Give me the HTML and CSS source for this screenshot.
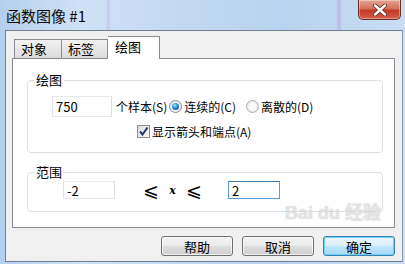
FILE: index.html
```html
<!DOCTYPE html>
<html lang="zh-CN">
<head>
	<meta charset="UTF-8">
	<title>函数图像 #1</title>
	<link rel="stylesheet" href="styles.css">
</head>
<body>
	<div class="window">
		<div class="titlebar">
			<span class="title">函数图像 #1</span>
			<button class="close">
				<svg width="16" height="12" viewBox="0 0 16 12">
					<path d="M3 1.5 L13 10.5 M13 1.5 L3 10.5" stroke="#5a2a22" stroke-width="4" stroke-linecap="round"/>
					<path d="M3 1.5 L13 10.5 M13 1.5 L3 10.5" stroke="#fff" stroke-width="2.4" stroke-linecap="round"/>
				</svg>
			</button>
		</div>
		<div class="client">
			<div class="tabs">
				<div class="tab first">对象</div>
				<div class="tab">标签</div>
				<div class="tab active">绘图</div>
			</div>
			<div class="panel">
				<fieldset class="group draw">
					<legend>绘图</legend>
					<div class="row samples">
						<input class="field num" type="text" value="750">
						<span class="lbl">个样本(S)</span>
						<span class="radio on"></span>
						<span class="lbl">连续的(C)</span>
						<span class="radio second"></span>
						<span class="lbl">离散的(D)</span>
					</div>
					<div class="row check-row">
						<span class="check">
							<svg width="11" height="11" viewBox="0 0 11 11"><path d="M2 5.5 L4.5 8.5 L9.5 1.5" fill="none" stroke="#24386e" stroke-width="2"/></svg>
						</span>
						<span class="lbl">显示箭头和端点(A)</span>
					</div>
				</fieldset>
				<fieldset class="group range">
					<legend>范围</legend>
					<div class="row">
						<input class="field small" type="text" value="-2">
						<span class="ineq"><span class="le">⩽</span><i>x</i><span class="le">⩽</span></span>
						<input class="field small focus" type="text" value="2">
					</div>
				</fieldset>
				<div class="mark">Bai du 经验</div>
			</div>
			<div class="buttons">
				<button class="btn">帮助</button>
				<button class="btn">取消</button>
				<button class="btn default">确定</button>
			</div>
		</div>
	</div>
</body>
</html>
```

FILE: styles.css
```css
*{
	margin: 0;
	padding: 0;
	box-sizing: border-box;
}
body{
	width: 405px;
	height: 264px;
	overflow: hidden;
	font-family: "Noto Sans CJK SC", "Liberation Sans", sans-serif;
	font-size: 12px;
	color: #000;
	background: linear-gradient(90deg, #b5cfee 0%, #cfe1f6 20%, #c2d8f2 45%, #b9d3f0 70%, #c9ddf4 100%);
}
.window{
	width: 405px;
	height: 264px;
	display: flex;
	flex-flow: column;
	background:
		linear-gradient(90deg, transparent 106px, rgba(190,150,220,0.35) 108px, transparent 111px),
		linear-gradient(90deg, transparent 336px, rgba(190,140,220,0.45) 339px, transparent 342px);
	background-size: 100% 30px;
	background-repeat: no-repeat;
}
.titlebar{
	height: 30px;
	display: flex;
	justify-content: space-between;
	align-items: flex-start;
	padding-left: 6px;
	padding-right: 4px;
}
.title{
	font-size: 15px;
	line-height: 15px;
	margin-top: 8px;
	color: #0a0a0a;
}
.close{
	width: 43px;
	height: 20px;
	border: 1px solid #6e2b22;
	border-top: none;
	border-radius: 0 0 5px 5px;
	background: linear-gradient(#e8a493 0%, #d4705c 45%, #c23a24 55%, #d5604a 100%);
	display: flex;
	align-items: center;
	justify-content: center;
	box-shadow: inset 0 0 0 1px rgba(255,255,255,0.35);
}
.client{
	flex: 1;
	margin: 0 2px 2px 5px;
	background: #f0f0f0;
	border: 1px solid #6f7f8f;
	border-right-color: #8a99a8;
	padding: 4px 7px 0 6px;
}
.tabs{
	display: flex;
	align-items: flex-end;
	height: 23px;
	padding-left: 2px;
}
.tab{
	height: 19px;
	width: 46px;
	padding-left: 6px;
	border: 1px solid #898c95;
	border-bottom: none;
	border-left: none;
	background: linear-gradient(#f2f2f2, #dcdcdc);
	line-height: 17px;
	font-size: 13px;
	white-space: nowrap;
}
.tab.first{
	border-left: 1px solid #898c95;
	width: 48px;
}
.tab.active{
	height: 23px;
	width: 52px;
	background: #fff;
	line-height: 19px;
	margin-bottom: -1px;
	position: relative;
	z-index: 1;
	padding-left: 7px;
}
.panel{
	position: relative;
	height: 170px;
	background: #fff;
	border: 1px solid #898c95;
	padding: 14px 11px 0 14px;
}
.group{
	border: 1px solid #dae1e7;
	border-radius: 4px;
	padding: 0;
}
.group legend{
	margin-left: 6px;
	padding: 0 2px;
	font-size: 13px;
	line-height: 14px;
}
.draw{
	height: 80px;
}
.range{
	margin-top: 12px;
	height: 47px;
}
.row{
	display: flex;
	align-items: center;
}
.samples{
	margin-top: 9px;
	padding-left: 24px;
}
.check-row{
	margin-top: 6px;
	padding-left: 109px;
}
.field{
	border: 1px solid #abadb3;
	border-top-color: #e3e9ef;
	border-left-color: #e2e3ea;
	border-right-color: #dbdfe6;
	border-bottom-color: #e3e9ef;
	font-family: "Noto Sans CJK SC", "Liberation Sans", sans-serif;
	font-size: 13px;
	padding-left: 3px;
	color: #000;
	outline: none;
}
.num{
	width: 60px;
	height: 21px;
	margin-right: 4px;
}
.small{
	width: 52px;
	height: 18px;
	line-height: 16px;
}
.focus{
	border-color: #569de5;
	border-top-color: #3d7bad;
}
.lbl{
	white-space: nowrap;
}
.radio{
	width: 13px;
	height: 13px;
	border-radius: 50%;
	border: 1px solid #8a8a8a;
	background: radial-gradient(circle, #fafafa 40%, #d6d6d6 100%);
	margin: 0 2px 0 2px;
	display: inline-flex;
	align-items: center;
	justify-content: center;
}
.radio.on::after{
	content: "";
	width: 7px;
	height: 7px;
	border-radius: 50%;
	background: radial-gradient(circle at 40% 35%, #a6e3ff 0%, #2a8ad4 45%, #0b3d7a 100%);
}
.radio.second{
	margin-left: 10px;
	border-color: #b0b0b0;
}
.check{
	width: 13px;
	height: 13px;
	border: 1px solid #8e8f8f;
	background: linear-gradient(135deg, #dcdcdc, #fafafa);
	margin-right: 2px;
	display: inline-flex;
	align-items: center;
	justify-content: center;
}
.range .row{
	margin-top: 2px;
	padding-left: 35px;
}
.ineq{
	width: 113px;
	padding-left: 28px;
	display: flex;
	align-items: center;
	gap: 5px;
}
.le{
	font-family: "DejaVu Sans", sans-serif;
	font-size: 19px;
	line-height: 16px;
	font-weight: 300;
}
.ineq i{
	font-family: "DejaVu Serif", serif;
	font-size: 11px;
	font-weight: bold;
	width: 9px;
	text-align: center;
	margin: 0 4px;
}
.buttons{
	display: flex;
	justify-content: flex-end;
	gap: 9px;
	margin-top: 8px;
}
.btn{
	width: 72px;
	height: 20px;
	border: 1px solid #707070;
	border-radius: 3px;
	background: linear-gradient(#f2f2f2 0%, #ebebeb 50%, #dddddd 51%, #cfcfcf 100%);
	font-family: "Noto Sans CJK SC", sans-serif;
	font-size: 13px;
	line-height: 17px;
	box-shadow: inset 0 0 0 1px rgba(255,255,255,0.7);
}
.btn.default{
	border-color: #3c7fb1;
	background: linear-gradient(#eaf6fd 0%, #d9f0fc 50%, #bee6fd 51%, #a7d9f5 100%);
	box-shadow: inset 0 0 0 1px #6fd0f7;
}
.mark{
	position: absolute;
	left: 272px;
	top: 145px;
	font-family: "Liberation Sans", sans-serif;
	font-size: 18px;
	font-weight: bold;
	line-height: 18px;
	color: rgba(255,255,255,0.6);
	text-shadow: 0 0 1px rgba(110,110,110,0.5);
	pointer-events: none;
}
```
